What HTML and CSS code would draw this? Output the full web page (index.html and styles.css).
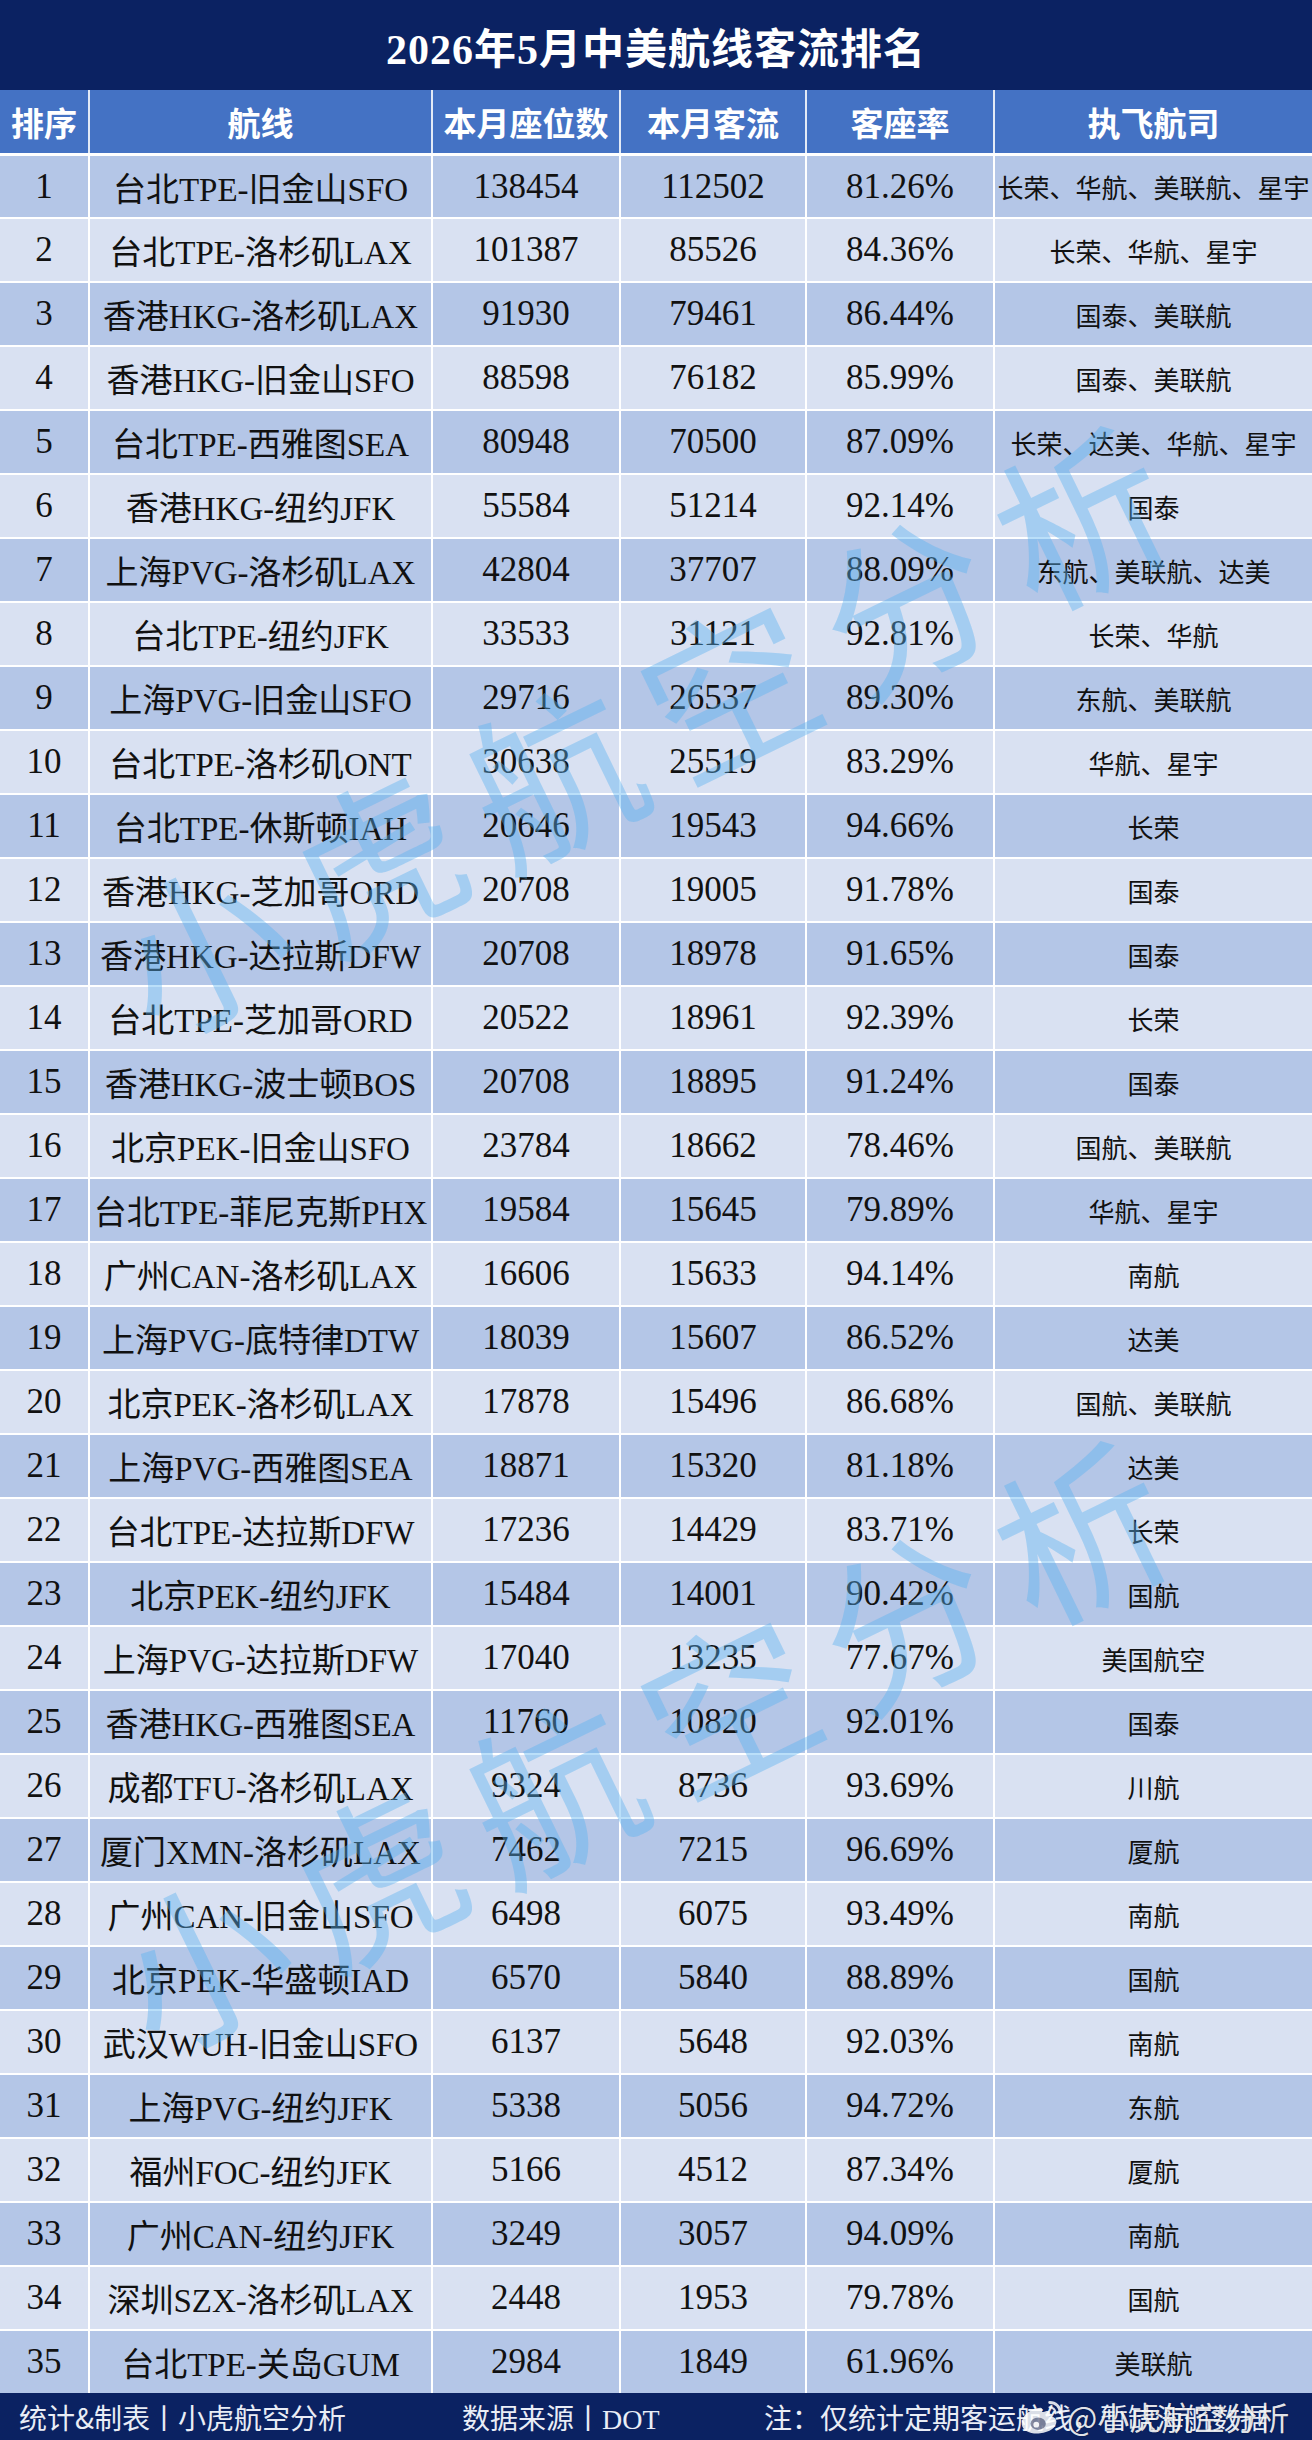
FILE: index.html
```html
<!DOCTYPE html>
<html lang="zh-CN">
<head>
<meta charset="utf-8">
<title>2026年5月中美航线客流排名</title>
<link rel="stylesheet" href="styles.css">
</head>
<body>
<div class="page">
  <div class="title">2026年5月中美航线客流排名</div>
  <div class="table">
    <div class="row head">
      <div class="c">排序</div><div class="c">航线</div><div class="c">本月座位数</div><div class="c">本月客流</div><div class="c">客座率</div><div class="c">执飞航司</div>
    </div>
    <div class="row odd"><div class="c">1</div><div class="c rt">台北TPE-旧金山SFO</div><div class="c">138454</div><div class="c">112502</div><div class="c">81.26%</div><div class="c al">长荣、华航、美联航、星宇</div></div>
    <div class="row even"><div class="c">2</div><div class="c rt">台北TPE-洛杉矶LAX</div><div class="c">101387</div><div class="c">85526</div><div class="c">84.36%</div><div class="c al">长荣、华航、星宇</div></div>
    <div class="row odd"><div class="c">3</div><div class="c rt">香港HKG-洛杉矶LAX</div><div class="c">91930</div><div class="c">79461</div><div class="c">86.44%</div><div class="c al">国泰、美联航</div></div>
    <div class="row even"><div class="c">4</div><div class="c rt">香港HKG-旧金山SFO</div><div class="c">88598</div><div class="c">76182</div><div class="c">85.99%</div><div class="c al">国泰、美联航</div></div>
    <div class="row odd"><div class="c">5</div><div class="c rt">台北TPE-西雅图SEA</div><div class="c">80948</div><div class="c">70500</div><div class="c">87.09%</div><div class="c al">长荣、达美、华航、星宇</div></div>
    <div class="row even"><div class="c">6</div><div class="c rt">香港HKG-纽约JFK</div><div class="c">55584</div><div class="c">51214</div><div class="c">92.14%</div><div class="c al">国泰</div></div>
    <div class="row odd"><div class="c">7</div><div class="c rt">上海PVG-洛杉矶LAX</div><div class="c">42804</div><div class="c">37707</div><div class="c">88.09%</div><div class="c al">东航、美联航、达美</div></div>
    <div class="row even"><div class="c">8</div><div class="c rt">台北TPE-纽约JFK</div><div class="c">33533</div><div class="c">31121</div><div class="c">92.81%</div><div class="c al">长荣、华航</div></div>
    <div class="row odd"><div class="c">9</div><div class="c rt">上海PVG-旧金山SFO</div><div class="c">29716</div><div class="c">26537</div><div class="c">89.30%</div><div class="c al">东航、美联航</div></div>
    <div class="row even"><div class="c">10</div><div class="c rt">台北TPE-洛杉矶ONT</div><div class="c">30638</div><div class="c">25519</div><div class="c">83.29%</div><div class="c al">华航、星宇</div></div>
    <div class="row odd"><div class="c">11</div><div class="c rt">台北TPE-休斯顿IAH</div><div class="c">20646</div><div class="c">19543</div><div class="c">94.66%</div><div class="c al">长荣</div></div>
    <div class="row even"><div class="c">12</div><div class="c rt">香港HKG-芝加哥ORD</div><div class="c">20708</div><div class="c">19005</div><div class="c">91.78%</div><div class="c al">国泰</div></div>
    <div class="row odd"><div class="c">13</div><div class="c rt">香港HKG-达拉斯DFW</div><div class="c">20708</div><div class="c">18978</div><div class="c">91.65%</div><div class="c al">国泰</div></div>
    <div class="row even"><div class="c">14</div><div class="c rt">台北TPE-芝加哥ORD</div><div class="c">20522</div><div class="c">18961</div><div class="c">92.39%</div><div class="c al">长荣</div></div>
    <div class="row odd"><div class="c">15</div><div class="c rt">香港HKG-波士顿BOS</div><div class="c">20708</div><div class="c">18895</div><div class="c">91.24%</div><div class="c al">国泰</div></div>
    <div class="row even"><div class="c">16</div><div class="c rt">北京PEK-旧金山SFO</div><div class="c">23784</div><div class="c">18662</div><div class="c">78.46%</div><div class="c al">国航、美联航</div></div>
    <div class="row odd"><div class="c">17</div><div class="c rt">台北TPE-菲尼克斯PHX</div><div class="c">19584</div><div class="c">15645</div><div class="c">79.89%</div><div class="c al">华航、星宇</div></div>
    <div class="row even"><div class="c">18</div><div class="c rt">广州CAN-洛杉矶LAX</div><div class="c">16606</div><div class="c">15633</div><div class="c">94.14%</div><div class="c al">南航</div></div>
    <div class="row odd"><div class="c">19</div><div class="c rt">上海PVG-底特律DTW</div><div class="c">18039</div><div class="c">15607</div><div class="c">86.52%</div><div class="c al">达美</div></div>
    <div class="row even"><div class="c">20</div><div class="c rt">北京PEK-洛杉矶LAX</div><div class="c">17878</div><div class="c">15496</div><div class="c">86.68%</div><div class="c al">国航、美联航</div></div>
    <div class="row odd"><div class="c">21</div><div class="c rt">上海PVG-西雅图SEA</div><div class="c">18871</div><div class="c">15320</div><div class="c">81.18%</div><div class="c al">达美</div></div>
    <div class="row even"><div class="c">22</div><div class="c rt">台北TPE-达拉斯DFW</div><div class="c">17236</div><div class="c">14429</div><div class="c">83.71%</div><div class="c al">长荣</div></div>
    <div class="row odd"><div class="c">23</div><div class="c rt">北京PEK-纽约JFK</div><div class="c">15484</div><div class="c">14001</div><div class="c">90.42%</div><div class="c al">国航</div></div>
    <div class="row even"><div class="c">24</div><div class="c rt">上海PVG-达拉斯DFW</div><div class="c">17040</div><div class="c">13235</div><div class="c">77.67%</div><div class="c al">美国航空</div></div>
    <div class="row odd"><div class="c">25</div><div class="c rt">香港HKG-西雅图SEA</div><div class="c">11760</div><div class="c">10820</div><div class="c">92.01%</div><div class="c al">国泰</div></div>
    <div class="row even"><div class="c">26</div><div class="c rt">成都TFU-洛杉矶LAX</div><div class="c">9324</div><div class="c">8736</div><div class="c">93.69%</div><div class="c al">川航</div></div>
    <div class="row odd"><div class="c">27</div><div class="c rt">厦门XMN-洛杉矶LAX</div><div class="c">7462</div><div class="c">7215</div><div class="c">96.69%</div><div class="c al">厦航</div></div>
    <div class="row even"><div class="c">28</div><div class="c rt">广州CAN-旧金山SFO</div><div class="c">6498</div><div class="c">6075</div><div class="c">93.49%</div><div class="c al">南航</div></div>
    <div class="row odd"><div class="c">29</div><div class="c rt">北京PEK-华盛顿IAD</div><div class="c">6570</div><div class="c">5840</div><div class="c">88.89%</div><div class="c al">国航</div></div>
    <div class="row even"><div class="c">30</div><div class="c rt">武汉WUH-旧金山SFO</div><div class="c">6137</div><div class="c">5648</div><div class="c">92.03%</div><div class="c al">南航</div></div>
    <div class="row odd"><div class="c">31</div><div class="c rt">上海PVG-纽约JFK</div><div class="c">5338</div><div class="c">5056</div><div class="c">94.72%</div><div class="c al">东航</div></div>
    <div class="row even"><div class="c">32</div><div class="c rt">福州FOC-纽约JFK</div><div class="c">5166</div><div class="c">4512</div><div class="c">87.34%</div><div class="c al">厦航</div></div>
    <div class="row odd"><div class="c">33</div><div class="c rt">广州CAN-纽约JFK</div><div class="c">3249</div><div class="c">3057</div><div class="c">94.09%</div><div class="c al">南航</div></div>
    <div class="row even"><div class="c">34</div><div class="c rt">深圳SZX-洛杉矶LAX</div><div class="c">2448</div><div class="c">1953</div><div class="c">79.78%</div><div class="c al">国航</div></div>
    <div class="row odd"><div class="c">35</div><div class="c rt">台北TPE-关岛GUM</div><div class="c">2984</div><div class="c">1849</div><div class="c">61.96%</div><div class="c al">美联航</div></div>

    <div class="wm wm1">小虎航空分析</div>
    <div class="wm wm2">小虎航空分析</div>
  </div>
  <div class="footer">
    <span class="f1">统计&amp;制表丨小虎航空分析</span>
    <span class="f2">数据来源丨DOT</span>
    <span class="f3">注：仅统计定期客运航线，暂缺海航数据</span>
    <div class="weibo">
      <svg class="wb-logo" width="48" height="40" viewBox="0 0 50 40">
        <path d="M20 12 C10 14 3 22 4 29 C5 36 14 39 23 38 C33 37 40 32 40 26 C40 22 36 20 33 21 C35 17 33 14 29 15 C27 16 25 16 25 15 C26 11 24 11 20 12 Z" fill="rgba(255,255,255,0.85)"/>
        <ellipse cx="21" cy="28" rx="8" ry="6.5" fill="rgba(40,50,90,0.55)"/>
        <circle cx="19" cy="29" r="3" fill="rgba(255,255,255,0.9)"/>
        <path d="M33 6 C39 6 44 10 44 17" stroke="rgba(255,255,255,0.85)" stroke-width="3" fill="none" stroke-linecap="round"/>
        <path d="M33 11 C36 11 39 13 39 17" stroke="rgba(255,255,255,0.85)" stroke-width="2.5" fill="none" stroke-linecap="round"/>
      </svg>
      <span class="wb-text">@小虎航空分析</span>
    </div>
  </div>
</div>
</body>
</html>
```

FILE: styles.css
```css
html, body {
  margin: 0;
  padding: 0;
  background: #ffffff;
}

.page {
  width: 1312px;
  height: 2440px;
  overflow: hidden;
  font-family: "Liberation Serif", "Noto Sans CJK SC", serif;
  color: #111;
}

.title {
  height: 90px;
  background: #0b2262;
  color: #ffffff;
  font-size: 42px;
  font-weight: 700;
  display: flex;
  align-items: center;
  justify-content: center;
  letter-spacing: 1px;
}

.table {
  position: relative;
  overflow: hidden;
}

.row {
  display: grid;
  grid-template-columns: 88px 343px 188px 186px 188px 1fr;
  box-sizing: border-box;
  height: 64px;
  border-top: 2px solid #ffffff;
}

.row .c {
  display: flex;
  align-items: center;
  justify-content: center;
  font-size: 35px;
  white-space: nowrap;
  overflow: hidden;
}

.row .c + .c {
  border-left: 2px solid #ffffff;
}

.row .c.rt {
  font-size: 33px;
}

.row .c.al {
  font-size: 26px;
}

.row.head {
  height: 63px;
  border-top: 0;
  background: #4472c4;
  color: #ffffff;
}

.row.head .c {
  font-size: 33px;
  font-weight: 700;
}

.row.head .c + .c {
  border-left: 2px solid rgba(255, 255, 255, 0.85);
}

.row.head + .row {
  border-top-width: 3px;
}

.row.odd {
  background: #b4c6e7;
}

.row.even {
  background: #d9e1f2;
}

.wm {
  position: absolute;
  font-family: "Noto Sans CJK SC", sans-serif;
  font-weight: 400;
  font-size: 170px;
  letter-spacing: 26px;
  color: rgba(90, 178, 240, 0.42);
  white-space: nowrap;
  transform-origin: center center;
  transform: translate(-50%, -50%) rotate(-26deg);
  pointer-events: none;
  line-height: 1;
}

.wm1 {
  left: 650px;
  top: 630px;
}

.wm2 {
  left: 650px;
  top: 1645px;
}

.footer {
  position: relative;
  height: 47px;
  background: #0b2262;
  color: #e9edf6;
  font-family: "Noto Sans CJK SC", sans-serif;
  font-size: 28px;
  display: flex;
  align-items: center;
  padding-left: 19px;
  box-sizing: border-box;
  white-space: nowrap;
}

.footer .f1 {
  width: 443px;
}

.footer .f2 {
  width: 302px;
  font-family: "Liberation Serif", "Noto Sans CJK SC", serif;
}

.weibo {
  position: absolute;
  left: 1018px;
  top: 3px;
  display: flex;
  align-items: center;
  gap: 1px;
}

.wb-text {
  font-family: "Noto Sans CJK SC", sans-serif;
  font-size: 32px;
  color: rgba(255, 255, 255, 0.9);
  text-shadow: 0 0 2px rgba(0, 0, 0, 0.4);
  line-height: 40px;
}
```
